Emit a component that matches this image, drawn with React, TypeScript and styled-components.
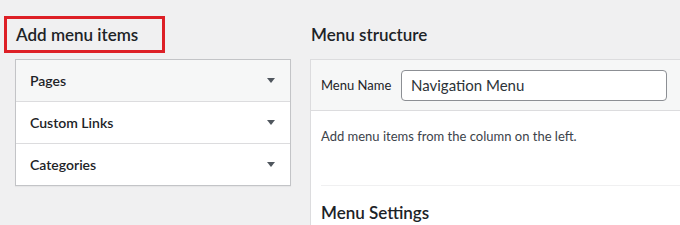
import styled, { createGlobalStyle } from 'styled-components';

const font = `Lato, "Noto Sans", sans-serif`;

const GlobalStyle = createGlobalStyle`
  html, body {
    margin: 0;
    padding: 0;
    background: #f0f0f1;
    font-family: ${font};
    color: #1d2327;
  }
`;

const Page = styled.div`
  display: flex;
  gap: 19px;
  padding: 16px 0 0 15px;
  height: 225px;
  box-sizing: border-box;
  overflow: hidden;
`;

const LeftColumn = styled.div`
  width: 276px;
  flex-shrink: 0;
`;

const RightColumn = styled.div`
  flex: 1;
  min-width: 0;
`;

const HighlightedTitle = styled.h2`
  display: block;
  width: 161px;
  margin: 0 0 6px -11px;
  padding: 0 0 0 9px;
  height: 37px;
  line-height: 31px;
  box-sizing: border-box;
  border: 3px solid #dd1f26;
  font-size: 17px;
  font-weight: 600;
`;

const ColumnTitle = styled.h2`
  margin: 0 0 6px 1px;
  height: 37px;
  line-height: 37px;
  font-size: 17px;
  font-weight: 600;
`;

const Accordion = styled.div`
  border: 1px solid #c3c4c7;
  background: #fff;
  box-shadow: 0 1px 1px rgba(0, 0, 0, 0.04);
`;

const AccordionRow = styled.div<{ $open?: boolean }>`
  display: flex;
  align-items: center;
  justify-content: space-between;
  height: 42px;
  padding: 0 15px 0 14px;
  box-sizing: border-box;
  background: ${p => (p.$open ? '#f6f7f7' : '#fff')};
  border-top: 1px solid #dcdcde;
  font-size: 14px;
  font-weight: 600;

  &:first-child {
    border-top: none;
    height: 41px;
  }
`;

const Arrow = styled.span`
  width: 0;
  height: 0;
  border-left: 4px solid transparent;
  border-right: 4px solid transparent;
  border-top: 5px solid #50575e;
`;

const MenuPanel = styled.div`
  border: 1px solid #dcdcde;
  border-right: none;
  border-bottom: none;
  background: #fff;
  height: 200px;
`;

const PanelHeader = styled.div`
  display: flex;
  align-items: center;
  height: 50px;
  padding: 0 12px 0 10px;
  background: #f6f7f7;
  border-bottom: 1px solid #dcdcde;
`;

const FieldLabel = styled.label`
  font-size: 13px;
  white-space: nowrap;
  width: 80px;
  flex-shrink: 0;
  color: #1d2327;
`;

const NameInput = styled.input`
  width: 266px;
  height: 31px;
  box-sizing: border-box;
  padding: 0 9px;
  border: 1px solid #8c8f94;
  border-radius: 4px;
  font-family: ${font};
  font-size: 15px;
  color: #2c3338;
  background: #fff;
  outline: none;
`;

const PanelBody = styled.div`
  padding: 0 0 0 10px;
`;

const Hint = styled.p`
  margin: 0;
  padding: 17px 0 0;
  height: 75px;
  box-sizing: border-box;
  font-size: 13px;
  color: #3c434a;
  border-bottom: 1px solid #f0f0f1;
`;

const SectionTitle = styled.h3`
  margin: 16px 0 0;
  font-size: 17px;
  font-weight: 600;
`;

const items = ['Pages', 'Custom Links', 'Categories'];

export default function App() {
  return (
    <>
      <GlobalStyle />
      <Page>
        <LeftColumn>
          <HighlightedTitle>Add menu items</HighlightedTitle>
          <Accordion>
            {items.map((item, i) => (
              <AccordionRow key={item} $open={i === 0}>
                {item}
                <Arrow />
              </AccordionRow>
            ))}
          </Accordion>
        </LeftColumn>
        <RightColumn>
          <ColumnTitle>Menu structure</ColumnTitle>
          <MenuPanel>
            <PanelHeader>
              <FieldLabel>Menu Name</FieldLabel>
              <NameInput defaultValue="Navigation Menu" />
            </PanelHeader>
            <PanelBody>
              <Hint>Add menu items from the column on the left.</Hint>
              <SectionTitle>Menu Settings</SectionTitle>
            </PanelBody>
          </MenuPanel>
        </RightColumn>
      </Page>
    </>
  );
}
